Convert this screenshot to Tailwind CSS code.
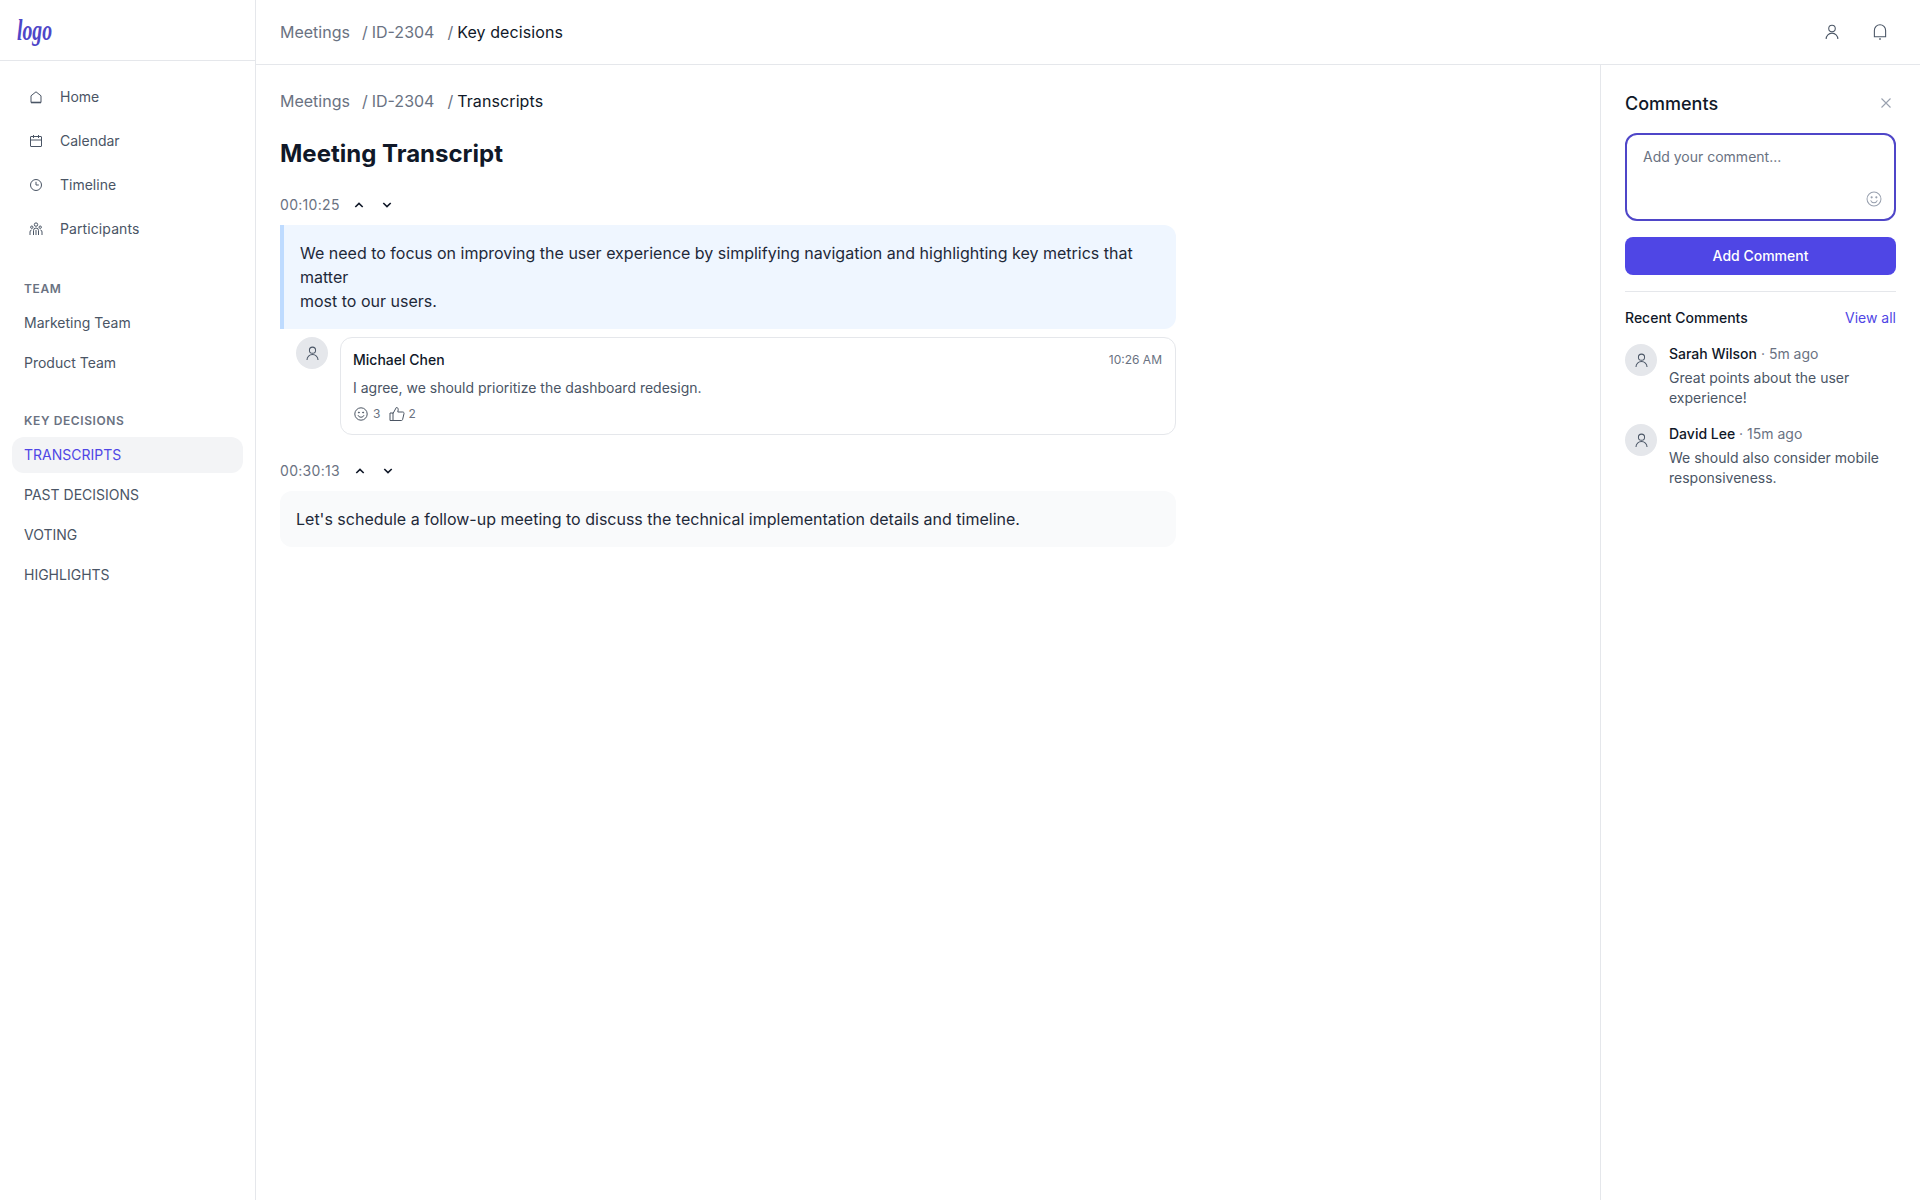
<!DOCTYPE html>
<html lang="en">
<head>
<meta charset="utf-8">
<title>Meeting Transcript</title>
<script src="https://cdn.jsdelivr.net/npm/@tailwindcss/browser@4"></script>
</head>
<body class="bg-white font-['Inter',sans-serif] text-gray-900">
<div class="flex h-[1200px] w-[1920px] overflow-hidden">
  <!-- Sidebar -->
  <aside class="w-64 shrink-0 border-r border-gray-200 flex flex-col">
    <div class="h-[61px] border-b border-gray-200 pl-[17px] flex items-center">
      <span class="inline-block origin-left scale-x-[0.68] font-['Liberation_Serif',serif] italic font-bold text-[29px] leading-none text-[#4f46c8]">logo</span>
    </div>
    <nav class="px-3 pt-[14px]">
      <a class="flex items-center gap-4 px-4 h-11 text-sm text-gray-600">
        <svg class="w-4 h-4 shrink-0" viewBox="0 0 16 16" fill="none" stroke="currentColor" stroke-width="1"><path d="M3 13.5V6.8L8 2.8l5 4v6.7z"/><path d="M3 13.5h10" stroke-width="1.6"/></svg>
        Home
      </a>
      <a class="flex items-center gap-4 px-4 h-11 text-sm text-gray-600">
        <svg class="w-4 h-4 shrink-0" viewBox="0 0 16 16" fill="none" stroke="currentColor" stroke-width="1"><rect x="2.5" y="3.5" width="11" height="10" rx=".5"/><path d="M2.5 7h11M5.5 2v3M10.5 2v3"/></svg>
        Calendar
      </a>
      <a class="flex items-center gap-4 px-4 h-11 text-sm text-gray-600">
        <svg class="w-4 h-4 shrink-0" viewBox="0 0 16 16" fill="none" stroke="currentColor" stroke-width="1"><circle cx="8" cy="8" r="5.5"/><path d="M8 4.8V8h2.8"/></svg>
        Timeline
      </a>
      <a class="flex items-center gap-4 px-4 h-11 text-sm text-gray-600">
        <svg class="w-4 h-4 shrink-0" viewBox="0 0 16 16" fill="none" stroke="currentColor" stroke-width="1"><circle cx="8" cy="3.6" r="1.7"/><circle cx="3.8" cy="6.2" r="1.2"/><circle cx="12.2" cy="6.2" r="1.2"/><path d="M5.5 14V9.5a2.5 2.5 0 0 1 5 0V14M8 9v5M2 14v-3a1.9 1.9 0 0 1 1.6-2M14 14v-3a1.9 1.9 0 0 0-1.6-2"/></svg>
        <span class="tracking-[0.1px]">Participants</span>
      </a>
    </nav>
    <div class="px-3 mt-[30px]">
      <h3 class="px-3 mb-2 text-xs leading-4 font-semibold tracking-wider uppercase text-gray-500">Team</h3>
      <div class="flex flex-col gap-1">
        <a class="flex items-center px-3 h-9 text-sm text-gray-600">Marketing Team</a>
        <a class="flex items-center px-3 h-9 text-sm text-gray-600">Product Team</a>
      </div>
    </div>
    <div class="px-3 mt-8">
      <h3 class="px-3 mb-2 text-xs leading-4 font-semibold tracking-wider uppercase text-gray-500">Key Decisions</h3>
      <div class="flex flex-col gap-1">
        <a class="flex items-center px-3 h-9 text-sm rounded-xl bg-gray-100 text-[#4f46e5]">TRANSCRIPTS</a>
        <a class="flex items-center px-3 h-9 text-sm text-gray-600">PAST DECISIONS</a>
        <a class="flex items-center px-3 h-9 text-sm text-gray-600">VOTING</a>
        <a class="flex items-center px-3 h-9 text-sm text-gray-600">HIGHLIGHTS</a>
      </div>
    </div>
  </aside>

  <div class="flex-1 flex flex-col min-w-0">
    <!-- Top bar -->
    <header class="h-[65px] shrink-0 border-b border-gray-200 pl-6 pr-[31px] flex items-center justify-between">
      <div class="flex items-center text-base text-gray-500">
        <span>Meetings</span><span class="ml-3 mr-1">/</span><span>ID-2304</span><span class="ml-[13px] mr-1">/</span><span class="tracking-[0.1px] text-gray-900">Key decisions</span>
      </div>
      <div class="flex items-center gap-[30px] text-gray-600">
        <svg class="w-[18px] h-[18px]" viewBox="0 0 16 16" fill="none" stroke="currentColor" stroke-width=".95"><circle cx="8" cy="4.9" r="2.9"/><path d="M2.8 14.2a5.2 5.2 0 0 1 10.4 0"/></svg>
        <svg class="w-[18px] h-[18px]" viewBox="0 0 16 16" fill="none" stroke="currentColor" stroke-width=".95"><path d="M3 12.2V6.6a5 5 0 0 1 10 0v5.6z"/><path d="M7.3 14.2h1.4" stroke-width="1.3"/></svg>
      </div>
    </header>

    <div class="flex-1 flex min-h-0">
      <!-- Main -->
      <main class="flex-1 min-w-0 p-6">
        <div class="flex items-center text-base text-gray-500">
          <span>Meetings</span><span class="ml-3 mr-1">/</span><span>ID-2304</span><span class="ml-[13px] mr-1">/</span><span class="tracking-[0.1px] text-gray-900">Transcripts</span>
        </div>
        <h1 class="mt-[25px] text-2xl font-bold text-gray-900">Meeting Transcript</h1>

        <div class="mt-[23px] max-w-4xl">
          <div class="flex items-center h-6 mb-2">
            <span class="text-sm tracking-[0.3px] text-gray-500">00:10:25</span>
            <div class="flex items-center gap-3 ml-[11px] text-gray-900">
              <svg class="w-4 h-4" viewBox="0 0 16 16" fill="none" stroke="currentColor" stroke-width="1.6"><path d="M4.3 10 8 6.4l3.7 3.6"/></svg>
              <svg class="w-4 h-4" viewBox="0 0 16 16" fill="none" stroke="currentColor" stroke-width="1.6"><path d="M4.3 6 8 9.6 11.7 6"/></svg>
            </div>
          </div>
          <div class="border-l-4 border-blue-200 bg-blue-50 rounded-r-xl p-4 text-base text-gray-800">
            We need to focus on improving the user experience by simplifying navigation and highlighting key metrics that matter<br>most to our users.
          </div>
          <div class="flex gap-3 mt-2 pl-4">
            <div class="w-8 h-8 shrink-0 rounded-full bg-gray-200 flex items-center justify-center text-gray-600">
              <svg class="w-[17px] h-[17px]" viewBox="0 0 16 16" fill="none" stroke="currentColor" stroke-width=".95"><circle cx="8" cy="4.9" r="2.9"/><path d="M2.8 14.2a5.2 5.2 0 0 1 10.4 0"/></svg>
            </div>
            <div class="flex-1 h-[98px] border border-gray-200 rounded-xl pl-3 pr-[13px] pt-3">
              <div class="flex items-center justify-between h-5">
                <span class="text-sm font-medium text-gray-900">Michael Chen</span>
                <span class="text-xs text-gray-500">10:26 AM</span>
              </div>
              <p class="mt-2 text-sm text-gray-600">I agree, we should prioritize the dashboard redesign.</p>
              <div class="flex items-center mt-2 text-xs text-gray-500">
                <svg class="w-4 h-4" viewBox="0 0 16 16" fill="none" stroke="#4b5563" stroke-width="1"><circle cx="8" cy="8" r="6.2"/><circle cx="5.9" cy="6.5" r=".5" fill="#4b5563"/><circle cx="10.1" cy="6.5" r=".5" fill="#4b5563"/><path d="M5 9.2a3.2 3.2 0 0 0 6 0"/></svg>
                <span class="ml-1">3</span>
                <svg class="ml-[9px] w-4 h-4" viewBox="0 0 16 16" fill="none" stroke="#4b5563" stroke-width="1"><path d="M1 7h3v7.5H1zM4 7.5 7.3 1.5c1.4 0 2.1 1 1.9 2.2L8.8 6h5c.9 0 1.4.8 1.2 1.6l-1.4 5.9c-.1.6-.6 1-1.2 1H4"/></svg>
                <span class="ml-[3px]">2</span>
              </div>
            </div>
          </div>

          <div class="flex items-center h-6 mt-6 mb-2">
            <span class="text-sm tracking-[0.3px] text-gray-500">00:30:13</span>
            <div class="flex items-center gap-3 ml-3 text-gray-900">
              <svg class="w-4 h-4" viewBox="0 0 16 16" fill="none" stroke="currentColor" stroke-width="1.6"><path d="M4.3 10 8 6.4l3.7 3.6"/></svg>
              <svg class="w-4 h-4" viewBox="0 0 16 16" fill="none" stroke="currentColor" stroke-width="1.6"><path d="M4.3 6 8 9.6 11.7 6"/></svg>
            </div>
          </div>
          <div class="bg-gray-50 rounded-xl p-4 text-base text-gray-800">
            Let's schedule a follow-up meeting to discuss the technical implementation details and timeline.
          </div>
        </div>
      </main>

      <!-- Comments panel -->
      <aside class="w-80 shrink-0 border-l border-gray-200 p-6">
        <div class="flex items-center justify-between h-[30px]">
          <h2 class="text-lg font-medium text-gray-900">Comments</h2>
          <svg class="w-4 h-4 mr-0.5 -mt-0.5 text-gray-400" viewBox="0 0 16 16" fill="none" stroke="currentColor" stroke-width="1.1"><path d="M3.5 3.5l9 9M12.5 3.5l-9 9"/></svg>
        </div>
        <div class="relative mt-3.5 h-[88px] rounded-xl border-2 border-[#4f46c8] px-4 py-3 text-sm text-gray-500">
          Add your comment...
          <svg class="absolute right-[11px] bottom-[11px] w-[18px] h-[18px] text-gray-400" viewBox="0 0 16 16" fill="none" stroke="currentColor" stroke-width=".9"><circle cx="8" cy="8" r="6.2"/><circle cx="5.9" cy="6.5" r=".5" fill="currentColor"/><circle cx="10.1" cy="6.5" r=".5" fill="currentColor"/><path d="M5 9.2a3.2 3.2 0 0 0 6 0"/></svg>
        </div>
        <button class="mt-4 w-full h-[38px] rounded-lg bg-[#4f46e5] text-sm font-medium text-white">Add Comment</button>
        <div class="mt-4 border-t border-gray-200 pt-4">
          <div class="flex items-center justify-between h-5">
            <span class="text-sm font-medium text-gray-900">Recent Comments</span>
            <a class="text-sm text-[#4f46e5]">View all</a>
          </div>
          <div class="mt-4 flex flex-col gap-4">
            <div class="flex gap-3">
              <div class="w-8 h-8 shrink-0 rounded-full bg-gray-200 flex items-center justify-center text-gray-600">
                <svg class="w-[17px] h-[17px]" viewBox="0 0 16 16" fill="none" stroke="currentColor" stroke-width=".95"><circle cx="8" cy="4.9" r="2.9"/><path d="M2.8 14.2a5.2 5.2 0 0 1 10.4 0"/></svg>
              </div>
              <div class="flex-1 min-w-0 text-sm">
                <p><span class="font-medium text-gray-900">Sarah Wilson</span><span class="text-gray-500"> · 5m ago</span></p>
                <p class="mt-1 text-gray-600">Great points about the user experience!</p>
              </div>
            </div>
            <div class="flex gap-3">
              <div class="w-8 h-8 shrink-0 rounded-full bg-gray-200 flex items-center justify-center text-gray-600">
                <svg class="w-[17px] h-[17px]" viewBox="0 0 16 16" fill="none" stroke="currentColor" stroke-width=".95"><circle cx="8" cy="4.9" r="2.9"/><path d="M2.8 14.2a5.2 5.2 0 0 1 10.4 0"/></svg>
              </div>
              <div class="flex-1 min-w-0 text-sm">
                <p><span class="font-medium text-gray-900">David Lee</span><span class="text-gray-500"> · 15m ago</span></p>
                <p class="mt-1 text-gray-600">We should also consider mobile responsiveness.</p>
              </div>
            </div>
          </div>
        </div>
      </aside>
    </div>
  </div>
</div>
</body>
</html>
